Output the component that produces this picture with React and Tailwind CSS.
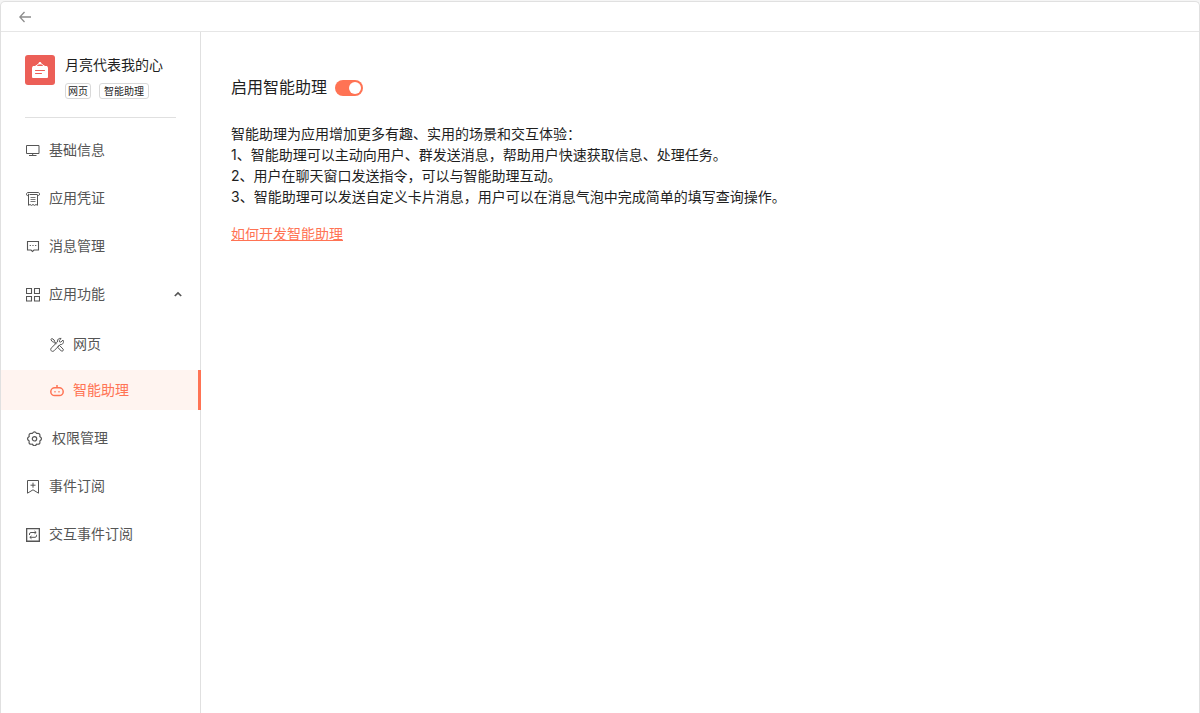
import React, { useState } from 'react';
import clsx from 'clsx';

const Svg = ({ width = 14, sw = 1, children }) => (
  <svg
    width={width}
    height="16"
    viewBox={`0 0 ${width} 16`}
    fill="none"
    stroke="currentColor"
    strokeWidth={sw}
    className="shrink-0"
    aria-hidden="true"
  >
    {children}
  </svg>
);

const MonitorIcon = () => (
  <Svg>
    <path d="M.5 3.5H13v8H.5zM6.7 11.5v2M3 13.5h7.5" />
  </Svg>
);

const ReceiptIcon = () => (
  <Svg>
    <path d="M2.5 5.5H1.300C.8 5.500.5 5 .5 4.200S1 2.500 2 2.500h10.200c.8 0 1.300.7 1.300 1.500s-.3 1.500-1 1.500h-.8" />
    <path d="M2.5 15.300V3.800M11.500 4.800v10.500M2.500 15.300l1.500-.8 1.500.9 1.500-.9 1.500.9 1.500-.9 1.500.8M3.500 4.500h8" />
    <path d="M4.500 7.500h5M4.500 9.500h5M4.500 11.500h5" strokeWidth="0.8" />
  </Svg>
);

const MessageIcon = () => (
  <Svg sw={1.1}>
    <path d="M1.5 3.500h11V12H8l-1.500 1.500L5 12H1.500z" />
    <path d="M3.700 7.500h1.200M6.400 7.500h1.200M9.100 7.500h1.200" />
  </Svg>
);

const AppsIcon = () => (
  <Svg sw={1.1}>
    <path d="M.5 2.500h5v5h-5zM8.500 2.500h5v5h-5zM.5 10.500h5v4.500h-5zM8.500 10.500h5v4.500h-5z" />
  </Svg>
);

const ToolsIcon = () => (
  <Svg>
    <path d="M.8 3.500l1.200-1 2.200 1.500.3 1.300 2 2M.8 3.500l1.600 2.200 1.300.3 2.100 2.200M8.300 10l1.200-.6 3.700 3.800c.8.900-.9 2.700-1.900 1.800l-3.500-3.600z" />
    <path d="M13 4.100l-2.200 2-1.300-.3-.3-1.400 2-1.900c-2-.7-4.300.8-3.800 3.500L1.200 12.100c-1.600 1.900.9 4.400 2.800 2.700l6.200-6.300c2.600.5 4.100-2.300 2.800-4.400z" />
  </Svg>
);

const RobotIcon = () => (
  <Svg sw={1.5}>
    <rect x=".8" y="5.800" width="12.400" height="7.800" rx="3.900" />
    <path d="M7 3v3M4.400 9.700h1.200M8.400 9.700h1.200" />
  </Svg>
);

const GearIcon = () => (
  <Svg width={17} sw={1.2}>
    <path
      strokeLinejoin="round"
      d="M6.300 3.500Q8.500.100 10.700 3.500Q14.600 2.700 13.800 6.600Q17.200 8.800 13.800 11Q14.600 14.900 10.700 14.100Q8.500 17.500 6.300 14.100Q2.400 14.900 3.200 11Q-.200 8.800 3.200 6.600Q2.400 2.700 6.300 3.500z"
    />
    <circle cx="8.500" cy="8.800" r="2.200" />
  </Svg>
);

const BookmarkIcon = () => (
  <Svg>
    <path d="M1.500 2.500h11v12.700L7 11.800l-5.500 3.400zM7 4.700v5M4.500 7.200h5" />
  </Svg>
);

const ExchangeIcon = () => (
  <Svg>
    <path d="M.6 2.600h12.800v12.600H.6z" strokeWidth="1.400" />
    <path d="M3.500 9V8q0-1.500 1.500-1.500h5M8.500 5l1.700 1.500L8.500 7.800M10.500 8.800v1q0 1.500-1.500 1.500H4M5.500 12.800l-1.700-1.500L5.500 10" />
  </Svg>
);

const MENU = [
  { label: '基础信息', Icon: MonitorIcon },
  { label: '应用凭证', Icon: ReceiptIcon },
  { label: '消息管理', Icon: MessageIcon },
  {
    label: '应用功能',
    Icon: AppsIcon,
    children: [
      { label: '网页', Icon: ToolsIcon },
      { label: '智能助理', Icon: RobotIcon },
    ],
  },
  { label: '权限管理', Icon: GearIcon },
  { label: '事件订阅', Icon: BookmarkIcon },
  { label: '交互事件订阅', Icon: ExchangeIcon },
];

const TAGS = [
  { label: '网页', pad: 'px-0.5' },
  { label: '智能助理', pad: 'px-1' },
];

const AppHeader = () => (
  <div className="mx-6 flex gap-2.5 border-b border-[#e0e0e0] pt-[23px] pb-[18px]">
    <svg width="30" height="30" viewBox="0 0 30 30" className="shrink-0" aria-hidden="true">
      <rect width="30" height="30" rx="3" fill="#ec5f57" />
      <path d="M10 11.500L15 8l5 3.500" fill="none" stroke="#fff" strokeWidth="1" />
      <circle cx="15" cy="8.200" r="1.300" fill="#fff" />
      <path d="M8 11h14l1 1.500V22a1 1 0 0 1-1 1H8a1 1 0 0 1-1-1v-9.500z" fill="#fff" />
      <path d="M10.500 15.500h9M10.500 18.500h6" stroke="#ec5f57" strokeWidth="1" strokeLinecap="round" />
    </svg>
    <div>
      <h1 className="text-sm leading-5 whitespace-nowrap text-[#1f1f1f]">月亮代表我的心</h1>
      <ul className="mt-2 flex gap-2">
        {TAGS.map(({ label, pad }) => (
          <li
            key={label}
            className={clsx('rounded-[3px] border border-[#d9d9d9] text-[10px] leading-[14px] text-[#1f1f1f]', pad)}
          >
            {label}
          </li>
        ))}
      </ul>
    </div>
  </div>
);

const Item = ({ label, Icon, active, onSelect, sub }) => (
  <a
    href="#"
    onClick={(e) => {
      e.preventDefault();
      onSelect(label);
    }}
    aria-current={active ? 'page' : undefined}
    className={clsx(
      '-mr-px flex h-10 items-center gap-[9px] border-r-[3px]',
      sub ? 'pl-[49px]' : 'pl-[25px]',
      active ? 'border-[#ff7354] bg-[#fff4f0] text-[#ff7354]' : 'border-transparent'
    )}
  >
    <Icon />
    {label}
  </a>
);

const Sidebar = () => {
  const [current, setCurrent] = useState('智能助理');
  const [open, setOpen] = useState(true);

  return (
    <aside className="w-[200px] shrink-0 border-r border-[#e0e0e0]">
      <AppHeader />
      <nav className="mt-3 text-sm text-[#555]">
        <ul className="flex flex-col gap-2">
          {MENU.map(({ label, Icon, children }) => (
            <li key={label}>
              {children ? (
                <>
                  <button
                    type="button"
                    aria-expanded={open}
                    onClick={() => setOpen(!open)}
                    className="flex h-10 w-full items-center gap-[9px] pr-[18px] pl-[25px]"
                  >
                    <Icon />
                    {label}
                    <svg
                      width="8"
                      height="6"
                      viewBox="0 0 8 6"
                      className={clsx('ml-auto', !open && 'rotate-180')}
                      aria-hidden="true"
                    >
                      <path d="M.8 5L4 2l3.200 3" fill="none" stroke="#555" strokeWidth="1.700" />
                    </svg>
                  </button>
                  {open && (
                    <ul className="mt-2.5 flex flex-col gap-1.5">
                      {children.map((child) => (
                        <li key={child.label}>
                          <Item {...child} sub active={current === child.label} onSelect={setCurrent} />
                        </li>
                      ))}
                    </ul>
                  )}
                </>
              ) : (
                <Item label={label} Icon={Icon} active={current === label} onSelect={setCurrent} />
              )}
            </li>
          ))}
        </ul>
      </nav>
    </aside>
  );
};

const AssistantPanel = () => {
  const [enabled, setEnabled] = useState(true);

  return (
    <main className="flex-1 px-[30px] pt-11 text-[#1f1f1f]">
      <div className="flex items-center gap-2">
        <label htmlFor="assistant-switch" className="text-base leading-[22px]">
          启用智能助理
        </label>
        <input
          id="assistant-switch"
          type="checkbox"
          role="switch"
          checked={enabled}
          onChange={(e) => setEnabled(e.target.checked)}
          className="mt-0.5 flex h-4 w-7 cursor-pointer appearance-none items-center rounded-full bg-[#bfbfbf] px-0.5 before:size-3 before:rounded-full before:bg-white checked:justify-end checked:bg-[#ff7354]"
        />
      </div>

      <p className="mt-[25px] text-sm leading-[21px]">智能助理为应用增加更多有趣、实用的场景和交互体验：</p>
      <p className="text-sm leading-[21px]">1、智能助理可以主动向用户、群发送消息，帮助用户快速获取信息、处理任务。</p>
      <p className="text-sm leading-[21px]">2、用户在聊天窗口发送指令，可以与智能助理互动。</p>
      <p className="text-sm leading-[21px]">3、智能助理可以发送自定义卡片消息，用户可以在消息气泡中完成简单的填写查询操作。</p>

      <a href="#" className="mt-4 inline-block text-sm leading-[21px] text-[#ff7354] underline">
        如何开发智能助理
      </a>
    </main>
  );
};

export default function App() {
  return (
    <div
      lang="zh-CN"
      className="flex min-h-screen flex-col bg-[#f5f5f5] pt-px font-[Inter,'Noto_Sans_CJK_SC',sans-serif]"
    >
      <div className="flex flex-1 flex-col rounded-t-[5px] border border-b-0 border-[#e0e0e0] bg-white">
        <header className="flex h-[30px] items-center border-b border-[#e6e6e6] pl-[18px]">
          <button type="button" aria-label="返回" className="text-[#8c8c8c]">
            <svg width="12" height="12" viewBox="0 0 12 12" fill="none" stroke="currentColor" strokeWidth="1.300" className="block">
              <path d="M12 6H.8M5.500 1L.8 6l4.700 5" />
            </svg>
          </button>
        </header>
        <div className="flex flex-1">
          <Sidebar />
          <AssistantPanel />
        </div>
      </div>
    </div>
  );
}
